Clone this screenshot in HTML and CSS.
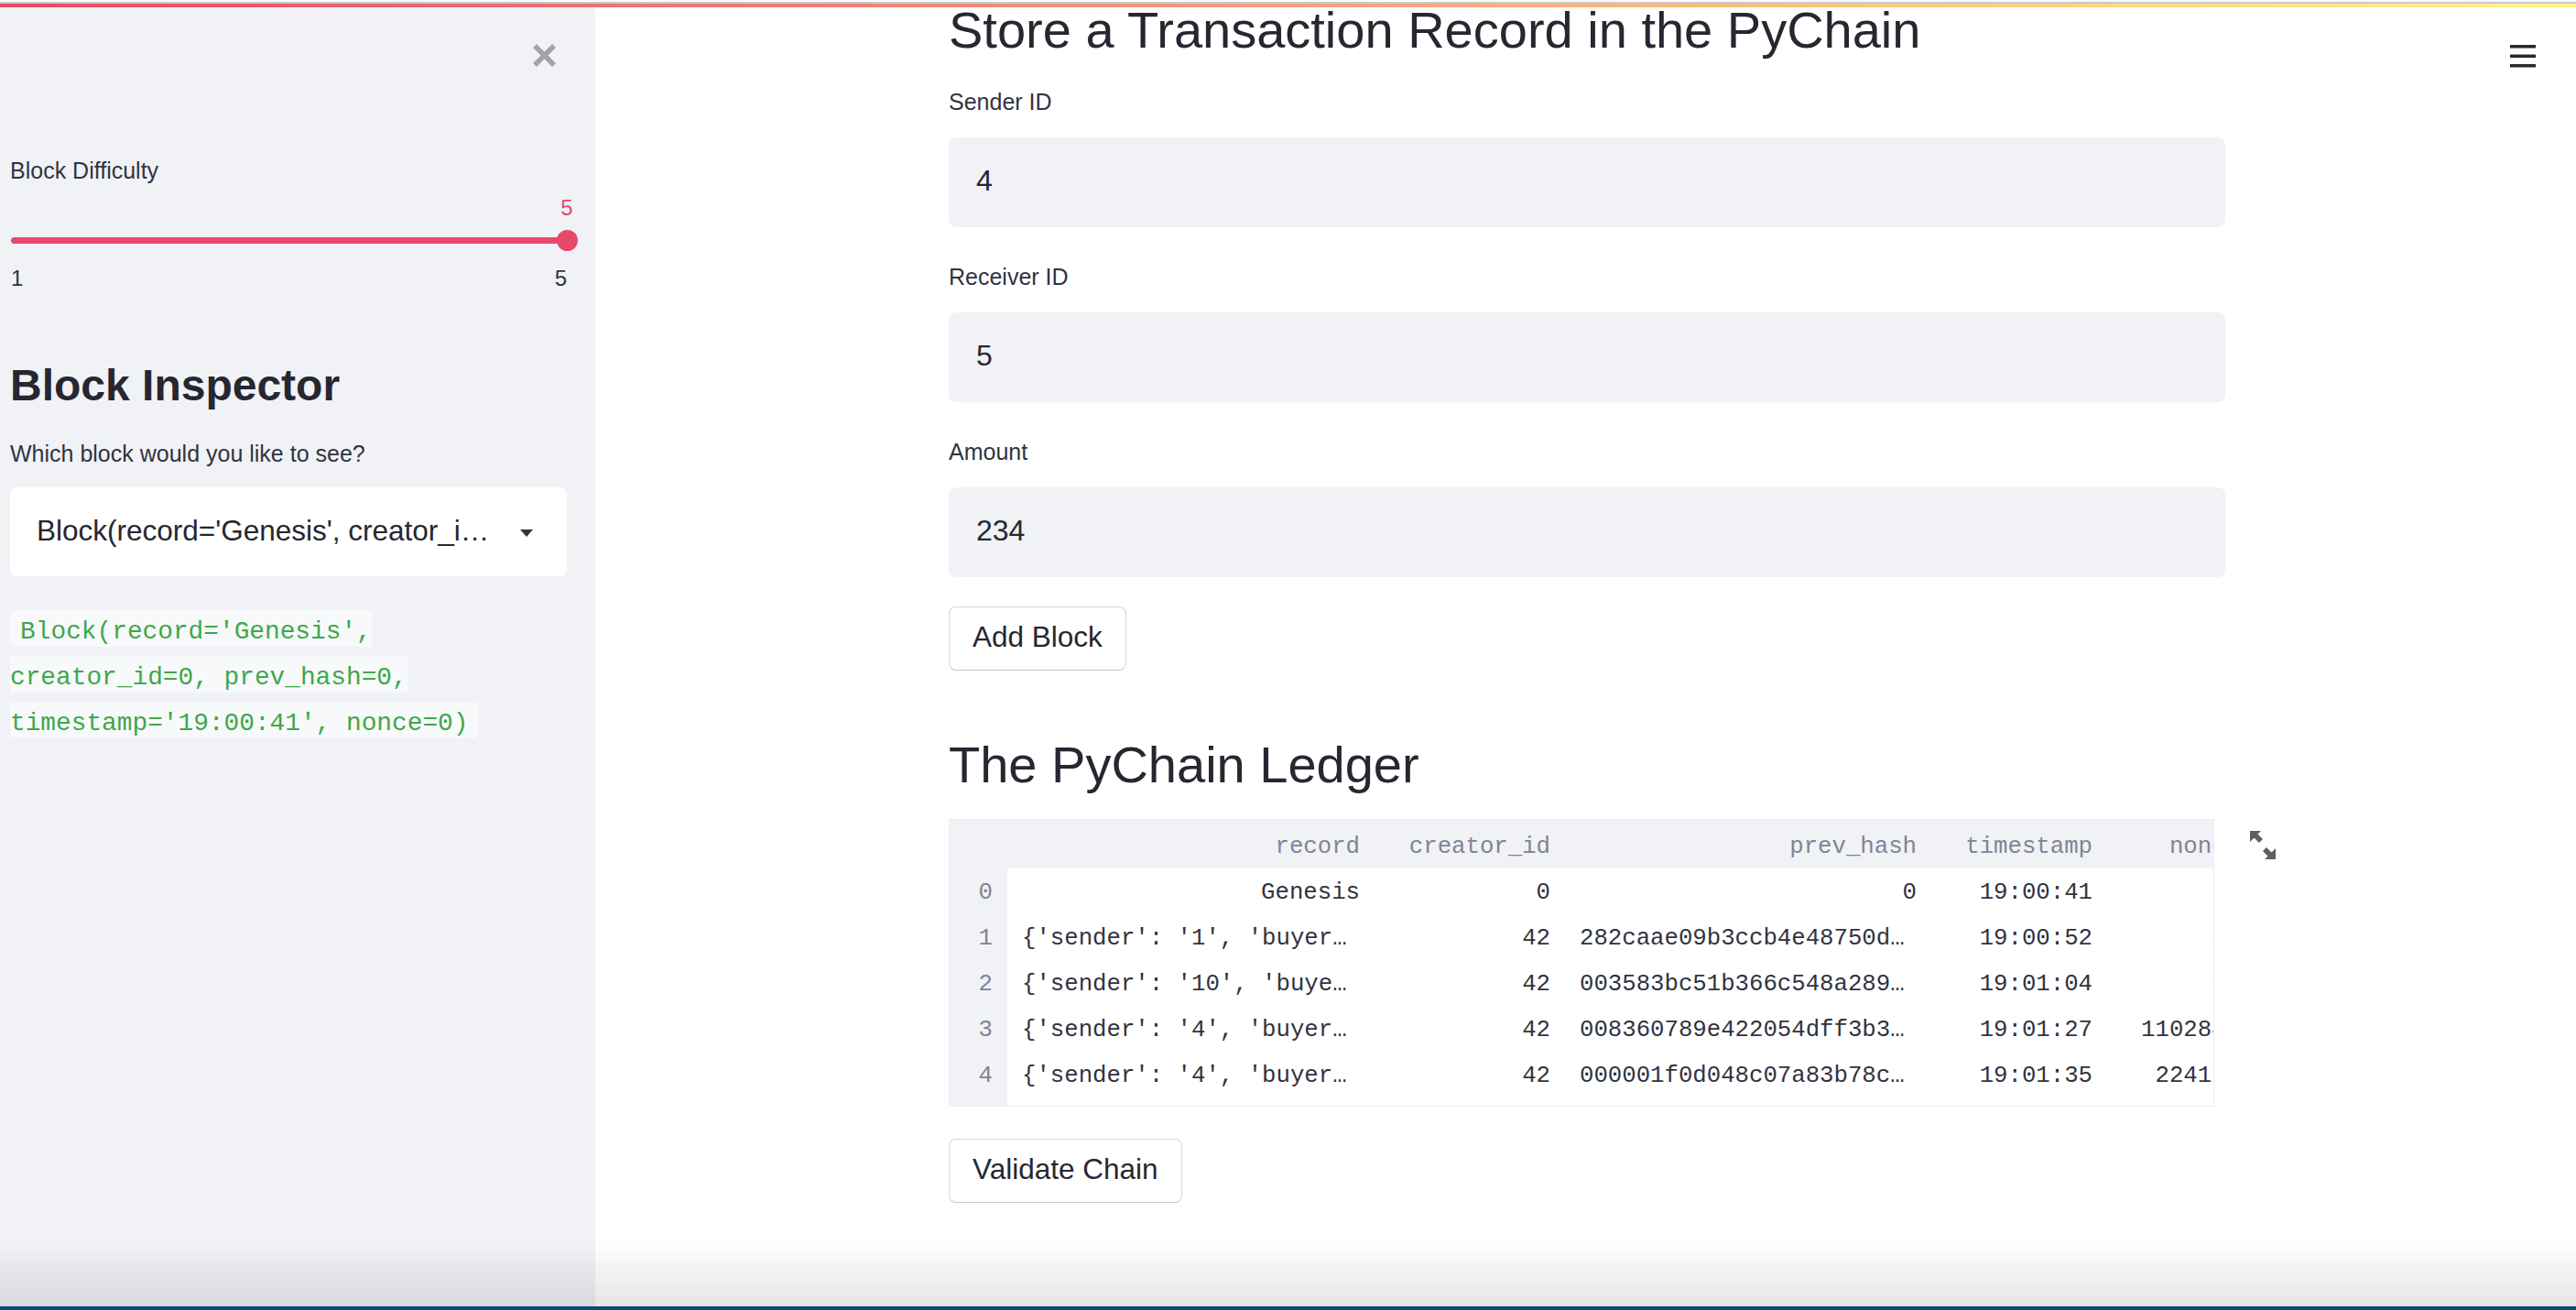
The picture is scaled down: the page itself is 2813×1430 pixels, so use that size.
FILE: index.html
```html
<!DOCTYPE html>
<html lang="en">
<head>
<meta charset="utf-8">
<title>PyChain</title>
<link rel="stylesheet" href="styles.css">
</head>
<body>
<div class="decoration"></div>
<div class="app">
  <aside class="sidebar">
    <div class="sb-head">
      <svg class="close" viewBox="0 0 27 27" aria-label="Close sidebar"><path d="M3 3 L24 24 M24 3 L3 24" stroke="#a2a3a9" stroke-width="5.5" fill="none"/></svg>
    </div>
    <div class="field-label sb-slider-label">Block Difficulty</div>
    <div class="slider">
      <div class="slider-value"><span>5</span></div>
      <div class="track-wrap"><div class="track"><span class="thumb"></span></div></div>
      <div class="ticks"><span>1</span><span>5</span></div>
    </div>
    <h2 class="sb-h2">Block Inspector</h2>
    <div class="field-label sb-select-label">Which block would you like to see?</div>
    <div class="select">
      <span class="select-text">Block(record='Genesis', creator_i…</span>
      <svg class="caret" viewBox="0 0 14 8"><path d="M0 0 L14 0 L7 8 Z" fill="#31333f"/></svg>
    </div>
    <p class="code-p"><code>Block(record='Genesis', creator_id=0, prev_hash=0, timestamp='19:00:41', nonce=0)</code></p>
  </aside>

  <main class="main">
    <svg class="menu" viewBox="0 0 28 25" aria-label="Menu"><rect x="0" y="0" width="28" height="3.5" fill="#262730"/><rect x="0" y="10.5" width="28" height="3.5" fill="#262730"/><rect x="0" y="21" width="28" height="3.5" fill="#262730"/></svg>
    <div class="main-inner">
      <h1 class="title">Store a Transaction Record in the PyChain</h1>

      <div class="field first">
        <div class="field-label">Sender ID</div>
        <div class="input">4</div>
      </div>
      <div class="field">
        <div class="field-label">Receiver ID</div>
        <div class="input">5</div>
      </div>
      <div class="field">
        <div class="field-label">Amount</div>
        <div class="input">234</div>
      </div>
      <div class="btn-row add"><button class="btn">Add Block</button></div>

      <h1 class="title ledger">The PyChain Ledger</h1>

      <div class="df">
        <div class="df-frame">
          <div class="df-row df-head">
            <div class="c"></div>
            <div class="c">record</div>
            <div class="c">creator_id</div>
            <div class="c">prev_hash</div>
            <div class="c">timestamp</div>
            <div class="c">nonce</div>
          </div>
          <div class="df-row">
            <div class="c idx">0</div>
            <div class="c">Genesis</div>
            <div class="c">0</div>
            <div class="c">0</div>
            <div class="c">19:00:41</div>
            <div class="c">0</div>
          </div>
          <div class="df-row">
            <div class="c idx">1</div>
            <div class="c l">{'sender': '1', 'buyer…</div>
            <div class="c">42</div>
            <div class="c l">282caae09b3ccb4e48750d…</div>
            <div class="c">19:00:52</div>
            <div class="c">37</div>
          </div>
          <div class="df-row">
            <div class="c idx">2</div>
            <div class="c l">{'sender': '10', 'buye…</div>
            <div class="c">42</div>
            <div class="c l">003583bc51b366c548a289…</div>
            <div class="c">19:01:04</div>
            <div class="c">91</div>
          </div>
          <div class="df-row">
            <div class="c idx">3</div>
            <div class="c l">{'sender': '4', 'buyer…</div>
            <div class="c">42</div>
            <div class="c l">008360789e422054dff3b3…</div>
            <div class="c">19:01:27</div>
            <div class="c">1102848</div>
          </div>
          <div class="df-row">
            <div class="c idx">4</div>
            <div class="c l">{'sender': '4', 'buyer…</div>
            <div class="c">42</div>
            <div class="c l">000001f0d048c07a83b78c…</div>
            <div class="c">19:01:35</div>
            <div class="c">224113</div>
          </div>
        </div>
        <svg class="expand" viewBox="0 0 28 31" aria-label="Fullscreen"><path d="M0 0 L12 0 L8.5 3.5 L14 9 L10 13 L4.5 7.5 L0 12 Z" fill="#5c5e68"/><path d="M28 31 L16 31 L19.5 27.5 L14 22 L18 18 L23.5 23.5 L28 19 Z" fill="#5c5e68"/></svg>
      </div>

      <div class="btn-row validate"><button class="btn">Validate Chain</button></div>
    </div>
  </main>
</div>
<div class="shade"></div>
<div class="edge"></div>
</body>
</html>
```

FILE: styles.css
```css
* { box-sizing: border-box; }
html, body { margin: 0; padding: 0; }
body {
  font-family: "Liberation Sans", Arial, Helvetica, sans-serif;
  color: #31333f;
  background: #ffffff;
  overflow: hidden;
  height: 1430px;
}

.decoration {
  position: fixed;
  top: 0; left: 0; right: 0;
  height: 8px;
  z-index: 5;
  background:
    linear-gradient(to bottom, #fbfbfb 0, #fbfbfb 2px, #cbcbcb 2px, #cbcbcb 4px, transparent 4px),
    linear-gradient(90deg, #e8496b, #fff58c);
}

.app { display: flex; height: 1430px; }

/* Sidebar */
.sidebar {
  width: 650px;
  flex: none;
  background: #f0f2f6;
  padding: 47px 31px 0 11px;
}
.sb-head { display: flex; justify-content: flex-end; height: 27px; margin-right: 11px; }
.close { width: 27px; height: 27px; display: block; }

.field-label { font-size: 25px; line-height: 35px; color: #31333f; }
.sb-slider-label { margin-top: 95px; }

.slider { margin-top: 8px; }
.slider-value {
  display: flex;
  justify-content: flex-end;
  height: 30px;
  font-size: 24px;
  line-height: 30px;
  color: #e8496b;
}
.slider-value span { width: 0; display: flex; justify-content: center; }
.track-wrap { height: 24px; display: flex; align-items: center; margin-top: 8px; padding-left: 1px; }
.track { position: relative; flex: 1; height: 7px; border-radius: 4px; background: #e8496b; }
.thumb {
  position: absolute;
  right: -11.5px; top: 50%;
  width: 23px; height: 23px;
  margin-top: -11.5px;
  border-radius: 50%;
  background: #e8496b;
}
.ticks {
  display: flex;
  justify-content: space-between;
  margin-top: 15px;
  padding-left: 1px;
  font-size: 24px;
  line-height: 30px;
  color: #31333f;
}

.sb-h2 {
  margin: 73px 0 0;
  font-size: 48px;
  line-height: 57.6px;
  font-weight: 700;
  color: #262730;
}
.sb-select-label { margin-top: 28px; }

.select {
  margin-top: 19px;
  height: 97px;
  background: #ffffff;
  border-radius: 8px;
  display: flex;
  align-items: center;
  justify-content: space-between;
  padding: 0 37px 2px 29px;
  font-size: 31.5px;
  color: #262730;
}
.select-text { white-space: nowrap; }
.caret { width: 14px; height: 8px; display: block; margin-top: 6px; }

.code-p {
  margin: 33px 0 0;
  line-height: 50px;
  font-family: "Liberation Mono", "DejaVu Sans Mono", monospace;
  font-size: 27.8px;
}
.code-p code {
  font-family: inherit;
  line-height: 42px;
  vertical-align: -4px;
  color: #3ea84a;
  background: #f8f9fb;
  border-radius: 8px;
  padding: 8.2px 0.4em 0.2px;
}

/* Main */
.main { flex: 1; position: relative; }
.menu { position: absolute; top: 49px; right: 44px; width: 28px; height: 25px; display: block; }
.main-inner { width: 1394px; margin-left: 386px; }

.title {
  margin: 0;
  font-size: 56px;
  line-height: 66px;
  font-weight: 400;
  color: #262730;
}
.title.ledger { margin-top: 70px; }

.field { margin-top: 37px; }
.field.first { margin-top: 28px; }
.input {
  margin-top: 21px;
  height: 98px;
  background: #f0f2f6;
  border-radius: 8px;
  padding: 0 30px 3px;
  display: flex;
  align-items: center;
  font-size: 32px;
  color: #262730;
}

.btn-row { display: flex; }
.btn-row.add { margin-top: 32px; }
.btn-row.validate { margin-top: 35px; }
.btn {
  height: 70px;
  padding: 0 25px 4px;
  border: 1px solid rgba(49, 51, 63, 0.2);
  border-bottom-color: rgba(49, 51, 63, 0.28);
  border-radius: 8px;
  background: #ffffff;
  font-family: "Liberation Sans", Arial, sans-serif;
  font-size: 31.5px;
  color: #262730;
  display: flex;
  align-items: center;
}

/* Dataframe */
.df { position: relative; margin-top: 26px; }
.df-frame {
  width: 1382px;
  height: 314px;
  overflow: hidden;
  border: 1px solid #eceef2;
  background: linear-gradient(90deg, #f0f2f6 63px, #ffffff 63px);
  font-family: "Liberation Mono", "DejaVu Sans Mono", monospace;
  font-size: 25.7px;
  color: #31333f;
}
.df-row {
  display: grid;
  grid-template-columns: 63px 401px 208px 400px 192px 161px;
  height: 50px;
  align-items: center;
}
.df-head { height: 52px; background: #f0f2f6; color: #808495; }
.c { padding: 6px 16px 0; text-align: right; white-space: nowrap; }
.df-row:not(.df-head) .c { padding-top: 4px; }
.c.l { text-align: left; }
.c.idx { color: #808495; }
.expand { position: absolute; left: 1421px; top: 13px; width: 28px; height: 31px; display: block; }

/* screen edge */
.shade {
  position: fixed;
  left: 0; right: 0; bottom: 4px;
  height: 72px;
  background: linear-gradient(to bottom, rgba(0,0,0,0), rgba(0,0,0,0.1));
  pointer-events: none;
}
.edge {
  position: fixed;
  left: 0; right: 0; bottom: 0;
  height: 4px;
  background: #0d4c77;
}
```
